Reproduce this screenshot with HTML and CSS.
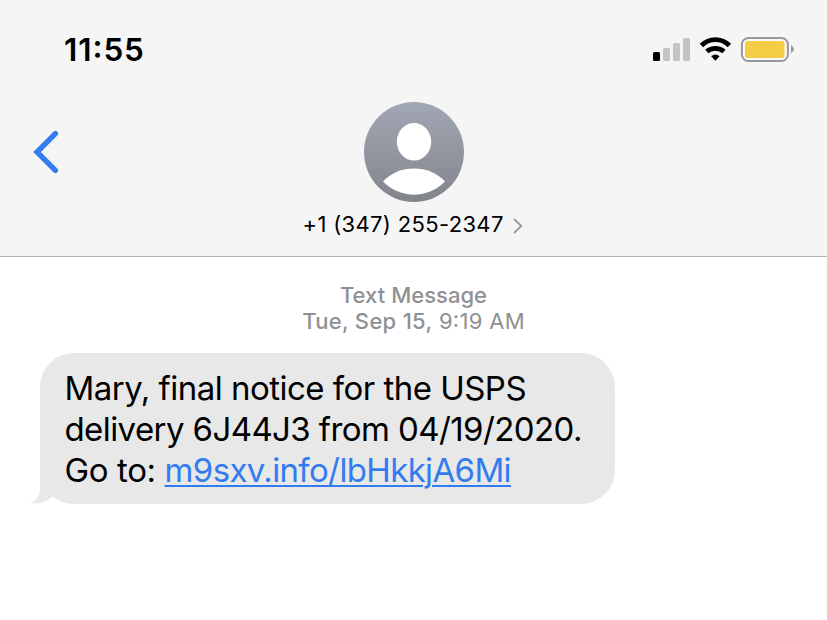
FILE: index.html
```html
<!DOCTYPE html>
<html lang="en">
<head>
<meta charset="utf-8">
<title>Messages</title>
<link rel="stylesheet" href="styles.css">
</head>
<body>
<header class="header">
  <div class="status">
    <span class="clock">11:55</span>
    <svg class="indicators" width="144" height="28" viewBox="0 0 144 28">
      <rect x="3" y="16" width="7" height="9" rx="1.5" fill="#000"/>
      <g fill="#c4c4c5">
        <rect x="13" y="12" width="7" height="13" rx="1.5"/>
        <rect x="23" y="7" width="7" height="18" rx="1.5"/>
        <rect x="33" y="2" width="7" height="23" rx="1.5"/>
      </g>
      <path d="M51.4 9.5C59.2 1.6 71.6 1.6 79.4 9.5" fill="none" stroke="#000" stroke-width="4.8"/>
      <path d="M56.8 15.4C61.5 11.3 69.3 11.3 74 15.4" fill="none" stroke="#000" stroke-width="4.6"/>
      <path d="M61.2 20.2Q65.4 16.8 69.6 20.2L65.4 24.8Z" fill="#000"/>
      <rect x="91.9" y="2" width="46" height="23" rx="6.5" fill="#fafafa" stroke="#98989b" stroke-width="2"/>
      <rect x="95" y="5" width="39.5" height="17" rx="2.5" fill="#f5cc46"/>
      <path d="M141 9.3Q144 11 144 13.3Q144 15.6 141 17.3Z" fill="#98989b"/>
    </svg>
  </div>
  <div class="nav">
    <svg class="back" width="28" height="46" viewBox="0 0 28 46">
      <path d="M24.4 4.6L6 23L24.4 41.3" fill="none" stroke="#327cf0" stroke-width="5.4" stroke-linecap="round" stroke-linejoin="miter"/>
    </svg>
    <div class="contact">
      <svg width="100" height="100" viewBox="0 0 100 100">
        <defs>
          <linearGradient id="shade" x1="0" y1="0" x2="0" y2="1">
            <stop offset="0" stop-color="#a1a7b4"/>
            <stop offset="1" stop-color="#83858c"/>
          </linearGradient>
        </defs>
        <circle cx="50" cy="50" r="50" fill="url(#shade)"/>
        <ellipse cx="50" cy="39.8" rx="17.2" ry="18.8" fill="#fff"/>
        <path d="M19 79.5C34 62 66 62 81 79.5C64 97 36 97 19 79.5Z" fill="#fff"/>
      </svg>
      <div class="number">
        <span class="digits">+1 (347) 255-2347</span>
        <svg width="12" height="18" viewBox="0 0 12 18"><path d="M2 2L9.3 9L2 16" fill="none" stroke="#98989b" stroke-width="1.8"/></svg>
      </div>
    </div>
  </div>
</header>
<main class="thread">
  <div class="stamp">
    <div class="kind"><span>Text Message</span></div>
    <div class="date"><span><b>Tue, Sep 15,</b> <span class="time">9:19 AM</span></span></div>
  </div>
  <div class="bubble">
    <svg class="tail" width="44" height="32" viewBox="0 0 44 32"><path d="M10 0V16C10 24 6 30 0 31.2C8 32.5 16 31 22.5 24L30 10Z" fill="#e8e8e9"/></svg>
    <div><span class="line1">Mary, final notice for the USPS</span></div>
    <div><span class="line2">delivery 6J44J3 from 04/19/2020.</span></div>
    <div><span class="line3">Go to: </span><a class="link">m9sxv.info/lbHkkjA6Mi</a></div>
  </div>
</main>
</body>
</html>
```
FILE: styles.css
```css
* { box-sizing: border-box; }
body {
  margin: 0;
  height: 620px;
  overflow: hidden;
  background: #fff;
  color: #000;
  font-family: Inter, "Liberation Sans", sans-serif;
}
.header {
  height: 257px;
  background: #f5f5f5;
  border-bottom: 1px solid #b2b2b3;
}
.status {
  display: flex;
  justify-content: space-between;
  align-items: flex-start;
  height: 102px;
  padding: 31px 33px 0 64px;
}
.clock {
  font-size: 31.5px;
  line-height: 38px;
  font-weight: 600;
  letter-spacing: 0.9px;
  font-feature-settings: "case";
}
.indicators { margin-top: 5px; }
.nav {
  display: grid;
  grid-template-columns: 1fr 240px 1fr;
  align-items: start;
}
.back { margin: 27px 0 0 31px; }
.contact {
  display: flex;
  flex-direction: column;
  align-items: center;
}
.contact > svg { display: block; }
.number {
  display: flex;
  align-items: center;
  gap: 8px;
  width: 222px;
  margin-top: 9px;
  font-size: 22px;
  line-height: 26px;
  white-space: nowrap;
}
.number svg { flex: none; margin-top: 4px; }
.digits { letter-spacing: 0.34px; }
.thread { padding: 25px 0 0 40px; }
.stamp {
  margin-left: -40px;
  text-align: center;
  color: #909092;
  font-size: 22px;
  line-height: 26px;
}
.kind { font-weight: 500; letter-spacing: 0.02px; }
.date { letter-spacing: 0.3px; }
.date b { font-weight: 500; }
.time { font-feature-settings: "case"; }
.bubble {
  position: relative;
  width: 575px;
  height: 151px;
  margin-top: 19px;
  padding: 15px 24.5px;
  border-radius: 34px;
  background: #e8e8e9;
  font-size: 33px;
  line-height: 41px;
  white-space: nowrap;
}
.line1 { letter-spacing: -0.52px; }
.line2 { letter-spacing: -0.59px; }
.line3 { letter-spacing: -0.38px; }
.tail {
  position: absolute;
  left: -10px;
  bottom: 0;
}
.link {
  letter-spacing: -0.64px;
  color: #327cf0;
  text-decoration: underline;
  text-decoration-thickness: 2px;
  text-underline-offset: 3px;
}
```
